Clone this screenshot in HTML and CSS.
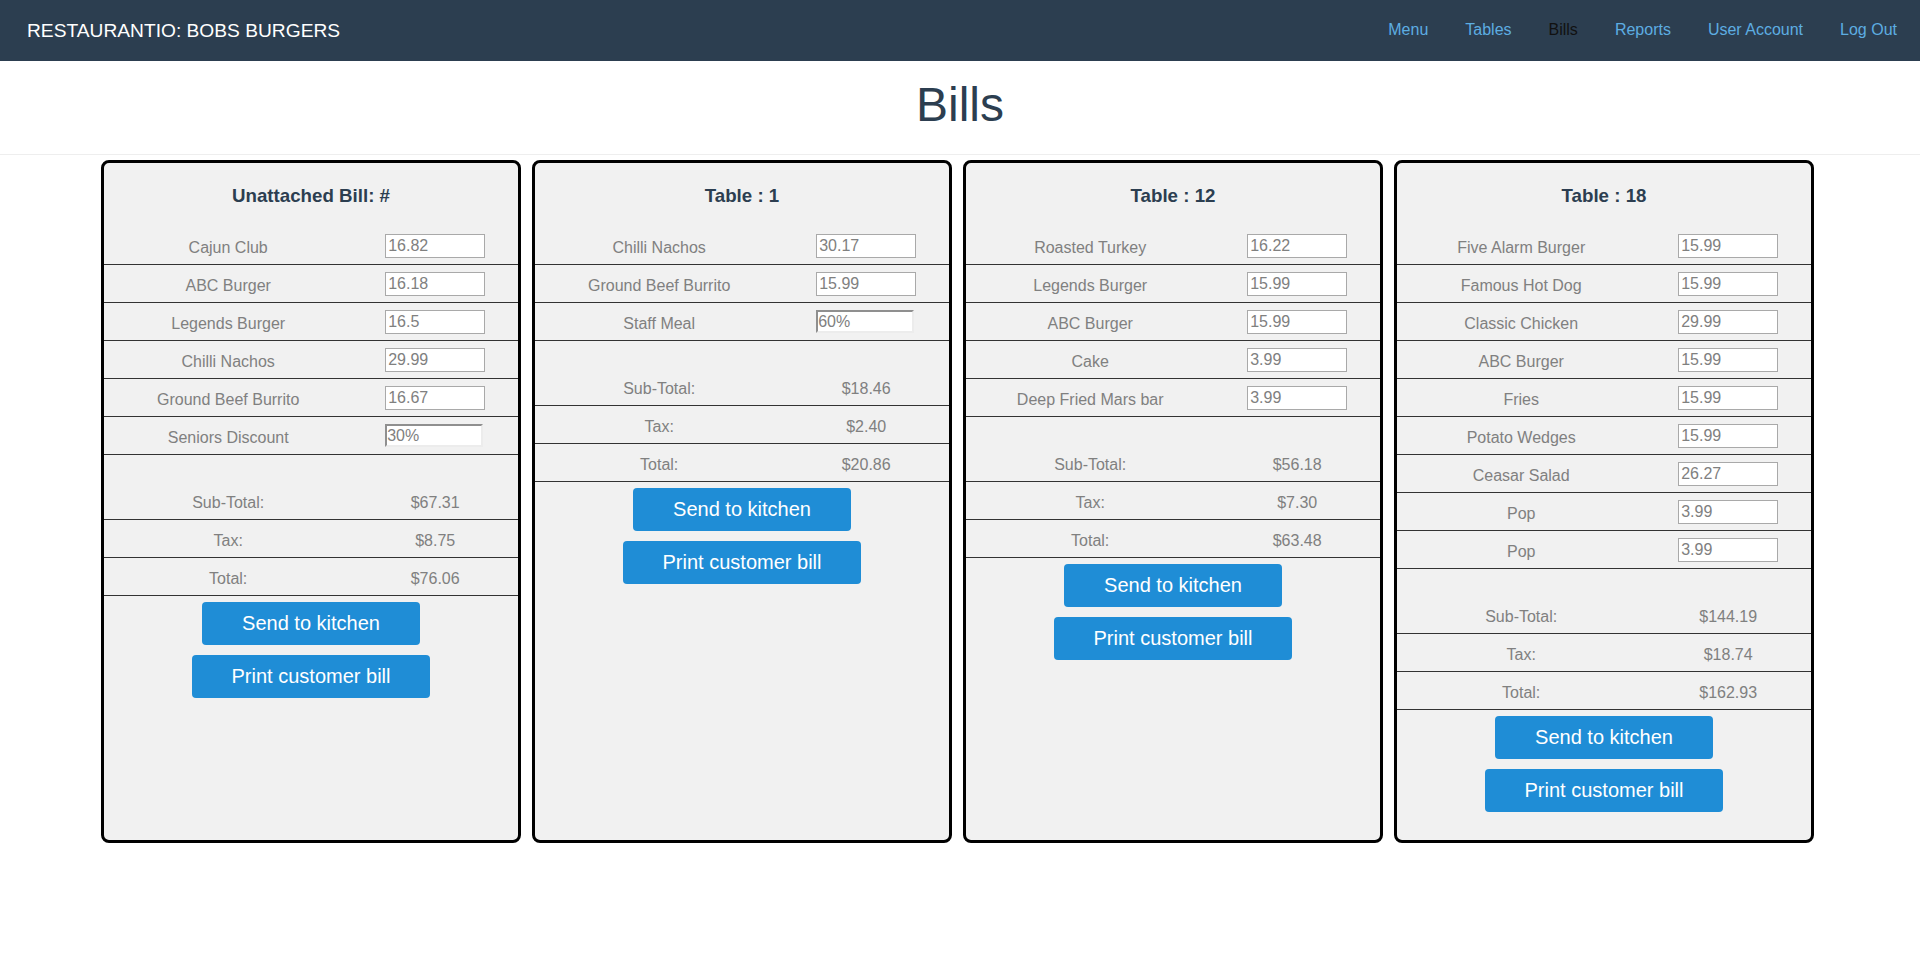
FILE: index.html
```html
<!DOCTYPE html>
<html lang="en">
<head>
<meta charset="utf-8">
<title>Restaurantio - Bills</title>
<link rel="stylesheet" href="styles.css">
</head>
<body>
<header class="navbar">
  <div class="brand">RESTAURANTIO: BOBS BURGERS</div>
  <nav class="nav-links">
    <a class="nav-link" href="#">Menu</a>
    <a class="nav-link" href="#">Tables</a>
    <a class="nav-link active" href="#">Bills</a>
    <a class="nav-link" href="#">Reports</a>
    <a class="nav-link" href="#">User Account</a>
    <a class="nav-link" href="#">Log Out</a>
  </nav>
</header>

<div class="page-title">
  <h1>Bills</h1>
</div>

<main class="bills">
  <section class="bill">
    <h3 class="bill-title">Unattached Bill: #</h3>
    <div class="bill-row"><span class="bill-label">Cajun Club</span><span class="bill-value"><input class="price" value="16.82"></span></div>
    <div class="bill-row"><span class="bill-label">ABC Burger</span><span class="bill-value"><input class="price" value="16.18"></span></div>
    <div class="bill-row"><span class="bill-label">Legends Burger</span><span class="bill-value"><input class="price" value="16.5"></span></div>
    <div class="bill-row"><span class="bill-label">Chilli Nachos</span><span class="bill-value"><input class="price" value="29.99"></span></div>
    <div class="bill-row"><span class="bill-label">Ground Beef Burrito</span><span class="bill-value"><input class="price" value="16.67"></span></div>
    <div class="bill-row"><span class="bill-label">Seniors Discount</span><span class="bill-value"><input class="price discount" value="30%"></span></div>
    <div class="bill-row subtotal"><span class="bill-label">Sub-Total:</span><span class="bill-amount">$67.31</span></div>
    <div class="bill-row"><span class="bill-label">Tax:</span><span class="bill-amount">$8.75</span></div>
    <div class="bill-row"><span class="bill-label">Total:</span><span class="bill-amount">$76.06</span></div>
    <div class="bill-actions">
      <button class="btn">Send to kitchen</button>
      <button class="btn">Print customer bill</button>
    </div>
  </section>

  <section class="bill">
    <h3 class="bill-title">Table : 1</h3>
    <div class="bill-row"><span class="bill-label">Chilli Nachos</span><span class="bill-value"><input class="price" value="30.17"></span></div>
    <div class="bill-row"><span class="bill-label">Ground Beef Burrito</span><span class="bill-value"><input class="price" value="15.99"></span></div>
    <div class="bill-row"><span class="bill-label">Staff Meal</span><span class="bill-value"><input class="price discount" value="60%"></span></div>
    <div class="bill-row subtotal"><span class="bill-label">Sub-Total:</span><span class="bill-amount">$18.46</span></div>
    <div class="bill-row"><span class="bill-label">Tax:</span><span class="bill-amount">$2.40</span></div>
    <div class="bill-row"><span class="bill-label">Total:</span><span class="bill-amount">$20.86</span></div>
    <div class="bill-actions">
      <button class="btn">Send to kitchen</button>
      <button class="btn">Print customer bill</button>
    </div>
  </section>

  <section class="bill">
    <h3 class="bill-title">Table : 12</h3>
    <div class="bill-row"><span class="bill-label">Roasted Turkey</span><span class="bill-value"><input class="price" value="16.22"></span></div>
    <div class="bill-row"><span class="bill-label">Legends Burger</span><span class="bill-value"><input class="price" value="15.99"></span></div>
    <div class="bill-row"><span class="bill-label">ABC Burger</span><span class="bill-value"><input class="price" value="15.99"></span></div>
    <div class="bill-row"><span class="bill-label">Cake</span><span class="bill-value"><input class="price" value="3.99"></span></div>
    <div class="bill-row"><span class="bill-label">Deep Fried Mars bar</span><span class="bill-value"><input class="price" value="3.99"></span></div>
    <div class="bill-row subtotal"><span class="bill-label">Sub-Total:</span><span class="bill-amount">$56.18</span></div>
    <div class="bill-row"><span class="bill-label">Tax:</span><span class="bill-amount">$7.30</span></div>
    <div class="bill-row"><span class="bill-label">Total:</span><span class="bill-amount">$63.48</span></div>
    <div class="bill-actions">
      <button class="btn">Send to kitchen</button>
      <button class="btn">Print customer bill</button>
    </div>
  </section>

  <section class="bill">
    <h3 class="bill-title">Table : 18</h3>
    <div class="bill-row"><span class="bill-label">Five Alarm Burger</span><span class="bill-value"><input class="price" value="15.99"></span></div>
    <div class="bill-row"><span class="bill-label">Famous Hot Dog</span><span class="bill-value"><input class="price" value="15.99"></span></div>
    <div class="bill-row"><span class="bill-label">Classic Chicken</span><span class="bill-value"><input class="price" value="29.99"></span></div>
    <div class="bill-row"><span class="bill-label">ABC Burger</span><span class="bill-value"><input class="price" value="15.99"></span></div>
    <div class="bill-row"><span class="bill-label">Fries</span><span class="bill-value"><input class="price" value="15.99"></span></div>
    <div class="bill-row"><span class="bill-label">Potato Wedges</span><span class="bill-value"><input class="price" value="15.99"></span></div>
    <div class="bill-row"><span class="bill-label">Ceasar Salad</span><span class="bill-value"><input class="price" value="26.27"></span></div>
    <div class="bill-row"><span class="bill-label">Pop</span><span class="bill-value"><input class="price" value="3.99"></span></div>
    <div class="bill-row"><span class="bill-label">Pop</span><span class="bill-value"><input class="price" value="3.99"></span></div>
    <div class="bill-row subtotal"><span class="bill-label">Sub-Total:</span><span class="bill-amount">$144.19</span></div>
    <div class="bill-row"><span class="bill-label">Tax:</span><span class="bill-amount">$18.74</span></div>
    <div class="bill-row"><span class="bill-label">Total:</span><span class="bill-amount">$162.93</span></div>
    <div class="bill-actions">
      <button class="btn">Send to kitchen</button>
      <button class="btn">Print customer bill</button>
    </div>
  </section>
</main>
</body>
</html>
```

FILE: styles.css
```css
* {
  box-sizing: border-box;
}

html, body {
  margin: 0;
  padding: 0;
  background: #ffffff;
  font-family: "Liberation Sans", Arial, Helvetica, sans-serif;
}

.navbar {
  height: 61px;
  background: #2c3e50;
  display: flex;
  align-items: center;
  justify-content: space-between;
  padding: 0 23px 0 27px;
}

.brand {
  color: #ffffff;
  font-size: 19.2px;
  line-height: 22px;
}

.nav-links {
  display: flex;
  align-items: center;
  gap: 37px;
  padding-bottom: 2px;
}

.nav-link {
  color: #5dade2;
  text-decoration: none;
  font-size: 16px;
  line-height: 18px;
}

.nav-link.active {
  color: #111111;
}

.page-title {
  padding: 16px 0 22px;
  border-bottom: 1px solid #eeeeee;
  text-align: center;
}

.page-title h1 {
  margin: 0;
  font-size: 48px;
  line-height: 55px;
  font-weight: normal;
  color: #2c3e50;
}

.bills {
  display: flex;
  align-items: stretch;
  gap: 11px;
  padding-left: 101px;
  margin-top: 5px;
}

.bill {
  width: 420px;
  flex: 0 0 420px;
  border: 3px solid #000000;
  border-radius: 8px;
  background: #f1f1f1;
}

.bill-title {
  margin: 22px 0 20px;
  font-size: 18.72px;
  line-height: 22px;
  font-weight: bold;
  color: #2c3e50;
  text-align: center;
}

.bill-row {
  display: grid;
  grid-template-columns: 60% 40%;
  align-items: center;
  height: 38px;
  border-bottom: 1px solid #333333;
  color: #808080;
  font-size: 16px;
}

.bill-row.subtotal {
  margin-top: 27px;
}

.bill-label,
.bill-amount {
  text-align: center;
  line-height: 18px;
  padding-top: 5px;
}

.bill-value {
  display: flex;
  justify-content: center;
}

.price {
  width: 100px;
  height: 24px;
  margin: 0;
  padding: 0 2px;
  border: 1px solid #a9a9a9;
  background: #ffffff;
  color: #808080;
  font-family: "Liberation Sans", Arial, sans-serif;
  font-size: 16px;
  border-radius: 0;
  outline: none;
}

.price.discount {
  width: 98px;
  height: 23px;
  padding: 0;
  border-width: 2px;
  border-style: solid;
  border-color: #8f8f8f #ececec #ececec #8f8f8f;
  transform: translateX(-1px);
}

.bill-actions {
  display: flex;
  flex-direction: column;
  align-items: center;
  gap: 10px;
  padding: 6px 0 28px;
}

.btn {
  margin: 0;
  border: none;
  border-radius: 4px;
  background: #1f8dd6;
  color: #ffffff;
  font-family: "Liberation Sans", Arial, sans-serif;
  font-size: 20px;
  line-height: 23px;
  padding: 10px 40px;
  cursor: pointer;
}
```
